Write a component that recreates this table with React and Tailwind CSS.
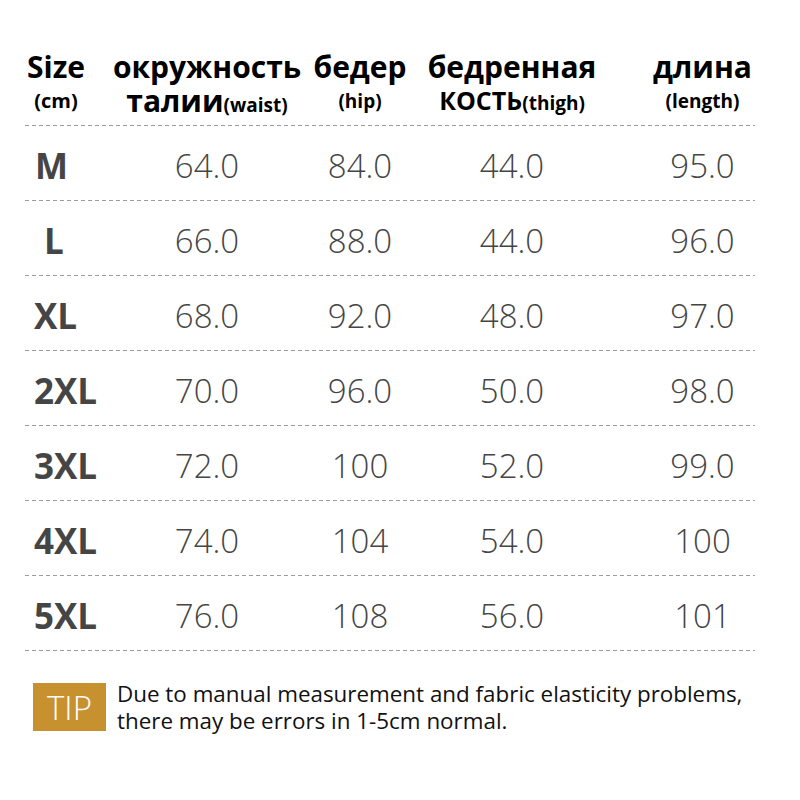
import React from "react";

const rows = [
  ["M", "64.0", "84.0", "44.0", "95.0", "pl-[10px]"],
  ["L", "66.0", "88.0", "44.0", "96.0", "pl-[19px]"],
  ["XL", "68.0", "92.0", "48.0", "97.0", "pl-[9px]"],
  ["2XL", "70.0", "96.0", "50.0", "98.0", "pl-[9px]"],
  ["3XL", "72.0", "100", "52.0", "99.0", "pl-[9px]"],
  ["4XL", "74.0", "104", "54.0", "100", "pl-[9px]"],
  ["5XL", "76.0", "108", "56.0", "101", "pl-[9px]"],
];

function Dash() {
  return (
    <div className="h-px w-full bg-[linear-gradient(to_right,#9c9c9c_4px,transparent_4px)] bg-[length:7px_1px] bg-repeat-x" />
  );
}

function Cols({ children, className = "" }) {
  return <div className={"grid grid-cols-[95px_174px_132px_172px_157px] " + className}>{children}</div>;
}

export default function App() {
  return (
    <div
      className="w-[800px] h-[800px] bg-white overflow-hidden"
      style={{ fontFamily: '"Open Sans", "Noto Sans", sans-serif' }}
    >
      <div className="ml-[25px] w-[730px] pt-[49px]">
        <Cols className="h-[76px] text-black font-bold">
          <div className="flex flex-col items-start">
            <div className="w-[62px] text-center text-[30px] leading-[35px]">Size</div>
            <div className="w-[62px] text-center text-[20px] leading-[34px]">(cm)</div>
          </div>
          <div className="flex flex-col items-center">
            <div className="text-[30px] leading-[35px] whitespace-nowrap">окружность</div>
            <div className="text-[30px] leading-[33px] h-[33px] whitespace-nowrap">
              талии<span className="text-[19px]">(waist)</span>
            </div>
          </div>
          <div className="flex flex-col items-center">
            <div className="text-[30px] leading-[35px]">бедер</div>
            <div className="text-[19px] leading-[35px]">(hip)</div>
          </div>
          <div className="flex flex-col items-center">
            <div className="text-[30px] leading-[35px]">бедренная</div>
            <div className="text-[25px] leading-[33px] h-[33px] whitespace-nowrap">
              КОСТЬ<span className="text-[19px]">(thigh)</span>
            </div>
          </div>
          <div className="flex flex-col items-center pl-[52px]">
            <div className="text-[30px] leading-[35px]">длина</div>
            <div className="text-[19px] leading-[35px]">(length)</div>
          </div>
        </Cols>
        <Dash />
        {rows.map((r) => (
          <div key={r[0]}>
            <Cols className="h-[74px] pt-[6px] items-center text-[#454545]">
              <div className={"text-[35px] font-bold " + r[5]}>{r[0]}</div>
              <div className="text-center text-[33px] font-light">{r[1]}</div>
              <div className="text-center text-[33px] font-light">{r[2]}</div>
              <div className="text-center text-[33px] font-light">{r[3]}</div>
              <div className="text-center text-[33px] font-light pl-[52px]">{r[4]}</div>
            </Cols>
            <Dash />
          </div>
        ))}
      </div>
      <div className="flex items-center mt-[29px] ml-[33px]">
        <div className="w-[73px] h-[48px] bg-[#c8912f] text-white text-[33px] font-light flex items-center justify-center leading-none">
          TIP
        </div>
        <div className="ml-[11px] text-[22.4px] leading-[27px] text-[#111]">
          <div className="whitespace-nowrap">Due to manual measurement and fabric elasticity problems,</div>
          <div className="whitespace-nowrap">there may be errors in 1-5cm normal.</div>
        </div>
      </div>
    </div>
  );
}
